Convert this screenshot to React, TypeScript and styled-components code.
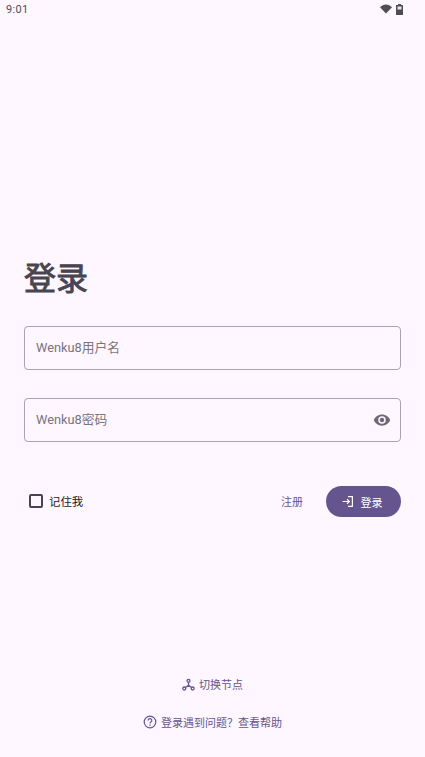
import * as React from 'react';
import styled, { createGlobalStyle } from 'styled-components';

const FONT = `Roboto, "Noto Sans CJK SC", sans-serif`;
const PRIMARY = '#65558f';

const GlobalStyle = createGlobalStyle`
  html, body {
    margin: 0;
    padding: 0;
    background: #fef7ff;
  }
  * { box-sizing: border-box; }
`;

const Page = styled.div`
  display: flex;
  flex-direction: column;
  width: 425px;
  height: 757px;
  overflow: hidden;
  background: #fef7ff;
  font-family: ${FONT};
  color: #1d1b20;
`;

const StatusBar = styled.div`
  display: flex;
  align-items: center;
  justify-content: space-between;
  height: 18px;
  padding: 0 22px 0 6px;
  font-size: 11px;
  color: #4f4c53;
  letter-spacing: 0.3px;
`;

const StatusIcons = styled.div`
  display: flex;
  align-items: center;
  gap: 4px;
`;

const Main = styled.main`
  display: flex;
  flex-direction: column;
  padding: 240px 24px 0;
`;

const Title = styled.h1`
  margin: 0 0 26px;
  height: 42px;
  font-size: 32px;
  line-height: 42px;
  font-weight: 400;
  -webkit-text-stroke: 0.9px #49454f;
  color: #49454f;
`;

const Field = styled.div`
  display: flex;
  align-items: center;
  justify-content: space-between;
  height: 44px;
  margin-bottom: 28px;
  padding: 0 9px 0 11px;
  border: 1px solid #a9a4b0;
  border-radius: 4px;
  font-size: 12.8px;
  line-height: 40px;
  color: #79747e;
`;

const Actions = styled.div`
  display: flex;
  align-items: center;
  margin-top: 16px;
  height: 31px;
`;

const Remember = styled.label`
  display: flex;
  align-items: center;
  gap: 6px;
  padding: 0 0 2px 5px;
  font-size: 11.4px;
  color: #1d1b20;
`;

const CheckBox = styled.span`
  width: 14px;
  height: 14px;
  border: 2px solid #49454f;
  border-radius: 2px;
`;

const Register = styled.span`
  margin-left: auto;
  margin-right: 23px;
  padding-bottom: 2px;
  font-size: 11px;
  color: ${PRIMARY};
`;

const LoginButton = styled.button`
  display: flex;
  align-items: center;
  justify-content: center;
  gap: 7px;
  width: 75px;
  height: 31px;
  padding: 0 4px 0 0;
  border: none;
  border-radius: 16px;
  background: ${PRIMARY};
  color: #fff;
  font-family: ${FONT};
  font-size: 11px;
`;

const Footer = styled.div`
  display: flex;
  flex-direction: column;
  align-items: center;
  gap: 22px;
  margin-top: 159px;
`;

const FooterLink = styled.div`
  display: flex;
  align-items: center;
  gap: 4px;
  height: 16px;
  font-size: 11px;
  color: ${PRIMARY};
`;

const Wifi = () => (
  <svg width="12" height="10" viewBox="0 0 13 10">
    <path d="M6.5 10 0 3.2C1.7 1.2 4 0 6.5 0S11.3 1.2 13 3.2z" fill="#4f4c53" />
  </svg>
);

const Battery = () => (
  <svg width="7" height="11" viewBox="0 0 7 11">
    <path d="M2 0h3v1h2v10H0V1h2z" fill="#4f4c53" />
    <rect x="1.5" y="2.5" width="4" height="3" fill="#e9e4ee" />
  </svg>
);

const Eye = () => (
  <svg width="18" height="18" viewBox="0 0 24 24" fill="#6f6a76">
    <path d="M12 4.5C7 4.5 2.7 7.6 1 12c1.7 4.4 6 7.5 11 7.5s9.3-3.1 11-7.5c-1.7-4.4-6-7.5-11-7.5zM12 17a5 5 0 1 1 0-10 5 5 0 0 1 0 10zm0-8a3 3 0 1 0 0 6 3 3 0 0 0 0-6z" />
  </svg>
);

const LoginIcon = () => (
  <svg width="13" height="13" viewBox="0 0 24 24" fill="none" stroke="#fff" strokeWidth="2.2">
    <path d="M13 3h8v18h-8M3 12h12M11 7.5l4.5 4.5-4.5 4.5" />
  </svg>
);

const NodeIcon = () => (
  <svg width="13" height="13" viewBox="0 0 14 14" fill="none" stroke={PRIMARY} strokeWidth="1.4">
    <circle cx="7" cy="3" r="1.6" />
    <circle cx="2.5" cy="11.3" r="1.6" />
    <circle cx="11.5" cy="11.3" r="1.6" />
    <path d="M7 4.6v3.2M7 7.8 3.7 10.2M7 7.8l3.3 2.4" />
  </svg>
);

const HelpIcon = () => (
  <svg width="14" height="14" viewBox="0 0 14 14" fill="none" stroke={PRIMARY} strokeWidth="1.2">
    <circle cx="7" cy="7" r="5.8" />
    <path d="M5.2 5.5A1.8 1.8 0 1 1 7.9 7c-.6.4-.9.7-.9 1.4" />
    <path d="M7 9.6v1.1" />
  </svg>
);

export default function App() {
  return (
    <Page>
      <GlobalStyle />
      <StatusBar>
        <span>9:01</span>
        <StatusIcons>
          <Wifi />
          <Battery />
        </StatusIcons>
      </StatusBar>
      <Main>
        <Title>登录</Title>
        <Field>Wenku8用户名</Field>
        <Field>
          Wenku8密码
          <Eye />
        </Field>
        <Actions>
          <Remember>
            <CheckBox />
            记住我
          </Remember>
          <Register>注册</Register>
          <LoginButton>
            <LoginIcon />
            登录
          </LoginButton>
        </Actions>
      </Main>
      <Footer>
        <FooterLink>
          <NodeIcon />
          切换节点
        </FooterLink>
        <FooterLink>
          <HelpIcon />
          登录遇到问题？查看帮助
        </FooterLink>
      </Footer>
    </Page>
  );
}
